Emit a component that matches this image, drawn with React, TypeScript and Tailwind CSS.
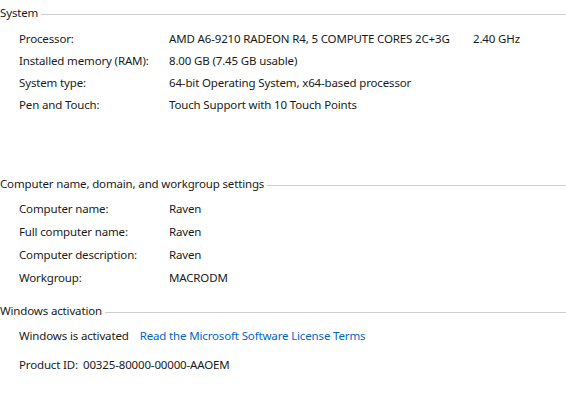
import React from 'react';

type Row = { label: string; value: React.ReactNode };

function Heading({ title }: { title: string }) {
  return (
    <div className="flex h-[26px] items-center">
      <span className="whitespace-nowrap pr-[3px]">{title}</span>
      <div className="mt-[3px] h-px flex-1 bg-[#cfcfcf]" />
    </div>
  );
}

function InfoRow({ label, value, h }: Row & { h: string }) {
  return (
    <div className={`flex items-center pl-[19px] ${h}`}>
      <span className="w-[150px] shrink-0 whitespace-nowrap">{label}</span>
      <span className="whitespace-nowrap">{value}</span>
    </div>
  );
}

export default function App() {
  const system: Row[] = [
    {
      label: 'Processor:',
      value: (
        <span className="flex">
          <span className="w-[304px]">AMD A6-9210 RADEON R4, 5 COMPUTE CORES 2C+3G</span>
          <span>2.40 GHz</span>
        </span>
      ),
    },
    { label: 'Installed memory (RAM):', value: '8.00 GB (7.45 GB usable)' },
    { label: 'System type:', value: '64-bit Operating System, x64-based processor' },
    { label: 'Pen and Touch:', value: 'Touch Support with 10 Touch Points' },
  ];

  const computer: Row[] = [
    { label: 'Computer name:', value: 'Raven' },
    { label: 'Full computer name:', value: 'Raven' },
    { label: 'Computer description:', value: 'Raven' },
    { label: 'Workgroup:', value: 'MACRODM' },
  ];

  return (
    <div className="h-[410px] w-[566px] overflow-hidden bg-white text-[11.5px] leading-none tracking-[-0.15px] text-[#1a1a1a] [font-family:'Noto_Sans',sans-serif]">
      <Heading title="System" />
      <div className="mt-[2px]">
        {system.map((r) => (
          <InfoRow key={r.label} {...r} h="h-[22px]" />
        ))}
      </div>

      <div className="mt-[55px]">
        <Heading title="Computer name, domain, and workgroup settings" />
      </div>
      <div>
        {computer.map((r) => (
          <InfoRow key={r.label} {...r} h="h-[23px]" />
        ))}
      </div>

      <div className="mt-[9px]">
        <Heading title="Windows activation" />
      </div>
      <div className="flex h-[24px] items-center pl-[19px]">
        <span>Windows is activated</span>
        <a className="ml-[11px] text-[#0066cc]" href="#">
          Read the Microsoft Software License Terms
        </a>
      </div>
      <div className="mt-[5px] flex h-[24px] items-center pl-[19px]">
        <span>Product ID:</span>
        <span className="ml-[5px]">00325-80000-00000-AAOEM</span>
      </div>
    </div>
  );
}
